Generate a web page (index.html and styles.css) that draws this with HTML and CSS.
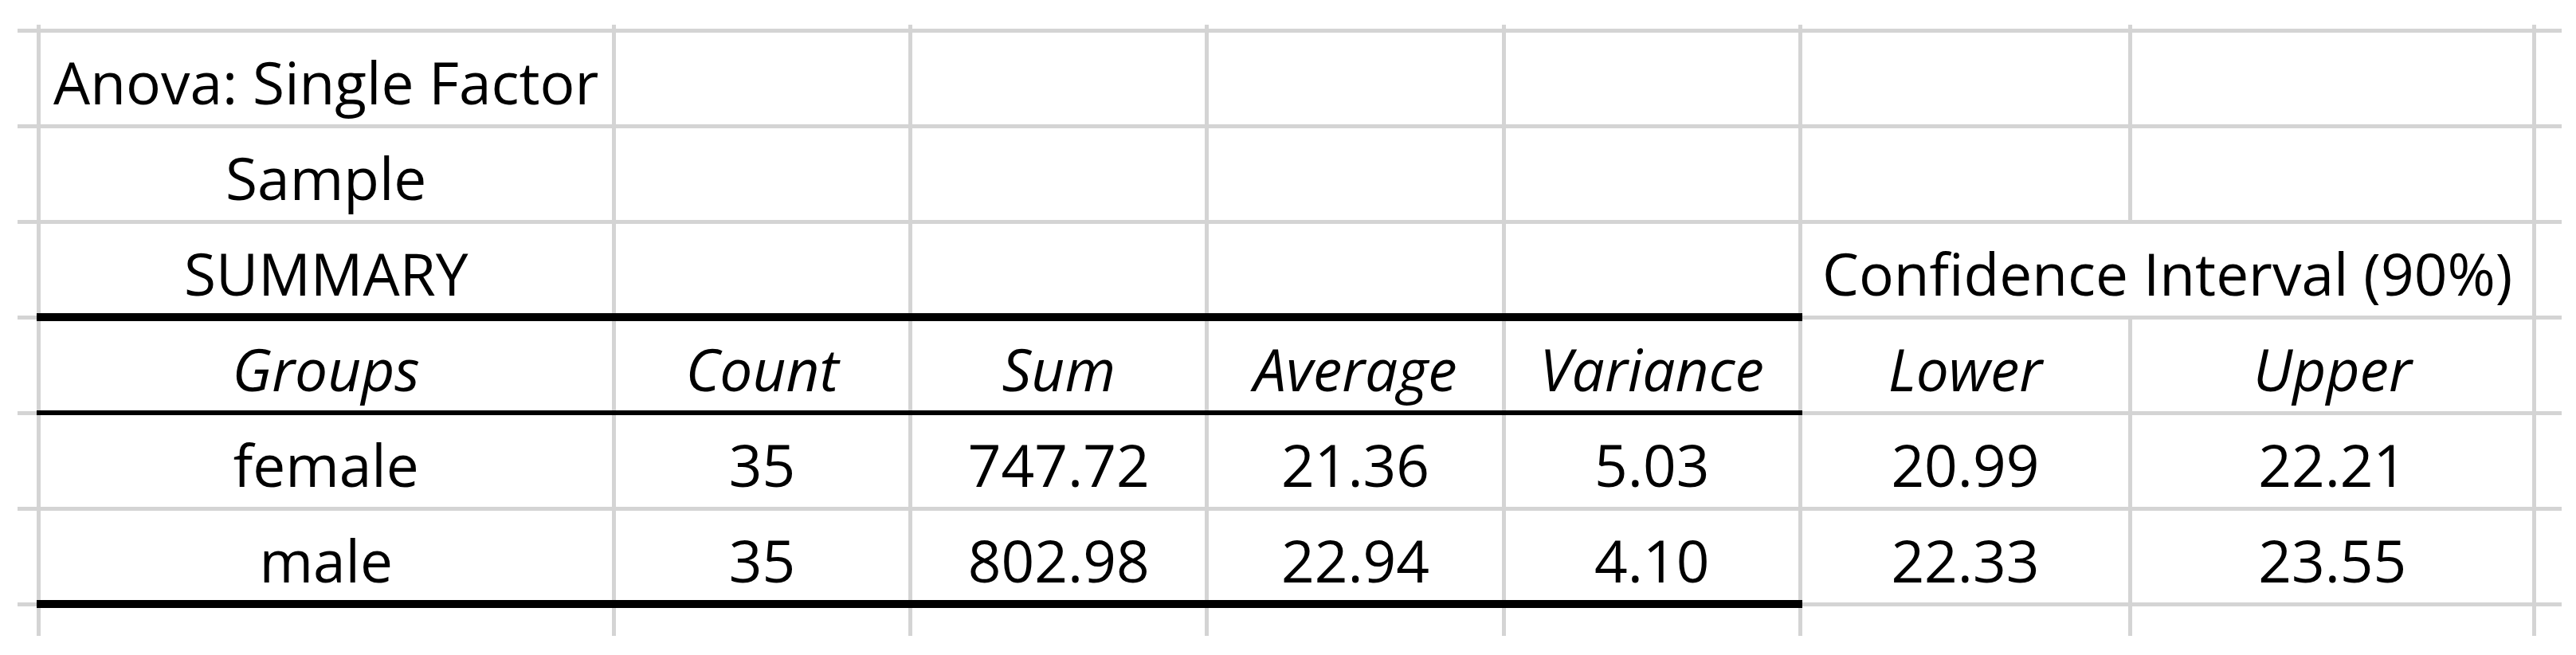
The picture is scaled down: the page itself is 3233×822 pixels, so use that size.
FILE: index.html
```html
<!DOCTYPE html>
<html lang="en">
<head>
  <meta charset="UTF-8">
  <title>Anova: Single Factor</title>
  <link rel="stylesheet" href="styles.css">
</head>
<body>

  <!-- Sheet grid: stub columns left/right and stub rows top/bottom only carry gridline ends -->
  <table class="sheet">
    <colgroup>
      <col class="w-stub-l">
      <col class="w-a">
      <col class="w-num">
      <col class="w-num">
      <col class="w-num">
      <col class="w-num">
      <col class="w-f">
      <col class="w-g">
      <col class="w-stub-r">
    </colgroup>

    <tr class="edge-top">
      <td class="stub-l"></td><td></td><td></td><td></td><td></td><td></td><td></td><td></td><td class="stub-r"></td>
    </tr>

    <tr>
      <td class="stub-l"></td>
      <td>Anova: Single Factor</td>
      <td></td><td></td><td></td><td></td><td></td><td></td>
      <td class="stub-r"></td>
    </tr>

    <tr>
      <td class="stub-l"></td>
      <td>Sample</td>
      <td></td><td></td><td></td><td></td><td></td><td></td>
      <td class="stub-r"></td>
    </tr>

    <tr>
      <td class="stub-l"></td>
      <td class="rule-thick">SUMMARY</td>
      <td class="rule-thick"></td>
      <td class="rule-thick"></td>
      <td class="rule-thick"></td>
      <td class="rule-thick"></td>
      <td colspan="2">Confidence Interval (90%)</td>
      <td class="stub-r"></td>
    </tr>

    <tr class="head">
      <td class="stub-l"></td>
      <td class="rule-thin">Groups</td>
      <td class="rule-thin">Count</td>
      <td class="rule-thin">Sum</td>
      <td class="rule-thin">Average</td>
      <td class="rule-thin">Variance</td>
      <td>Lower</td>
      <td>Upper</td>
      <td class="stub-r"></td>
    </tr>

    <tr>
      <td class="stub-l"></td>
      <td>female</td>
      <td>35</td>
      <td>747.72</td>
      <td>21.36</td>
      <td>5.03</td>
      <td>20.99</td>
      <td>22.21</td>
      <td class="stub-r"></td>
    </tr>

    <tr>
      <td class="stub-l"></td>
      <td class="rule-thick">male</td>
      <td class="rule-thick">35</td>
      <td class="rule-thick">802.98</td>
      <td class="rule-thick">22.94</td>
      <td class="rule-thick">4.10</td>
      <td>22.33</td>
      <td>23.55</td>
      <td class="stub-r"></td>
    </tr>

    <tr class="edge-bottom">
      <td class="stub-l"></td><td></td><td></td><td></td><td></td><td></td><td></td><td></td><td class="stub-r"></td>
    </tr>
  </table>

</body>
</html>
```

FILE: styles.css
```css
body {
  margin: 0;
  background: #fff;
  font-family: "Open Sans", "Liberation Sans", sans-serif;
}

.sheet {
  border-collapse: collapse;
  table-layout: fixed;
  width: 3193px;
  margin: 31px 0 0 22px;
  font-size: 73px;
  line-height: 73px;
  color: #000;
}

/* column widths, measured gridline to gridline */
.w-stub-l { width: 26px; }
.w-a { width: 722px; }
.w-num { width: 372px; }
.w-f { width: 414px; }
.w-g { width: 507px; }
.w-stub-r { width: 34px; }

.sheet tr {
  height: 120px;
}

.sheet td {
  border: 5px solid #d4d4d4;
  padding: 0 0 17px;
  text-align: center;
  vertical-align: bottom;
  white-space: nowrap;
}

.sheet td.stub-l {
  border-left: none;
}

.sheet td.stub-r {
  border-right: none;
}

.sheet .edge-top {
  height: 7px;
}

.sheet .edge-top td {
  border-top: none;
  padding: 0;
}

.sheet .edge-bottom {
  height: 40px;
}

.sheet .edge-bottom td {
  border-bottom: none;
  padding: 0;
}

.head td {
  font-style: italic;
}

.sheet td.rule-thick {
  border-bottom: 10px solid #000;
  padding-bottom: 14px;
}

.sheet td.rule-thin {
  border-bottom: 6px solid #000;
  padding-bottom: 16px;
}
```
